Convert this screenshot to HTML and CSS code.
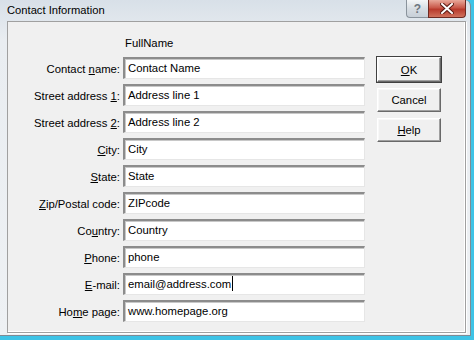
FILE: index.html
```html
<!DOCTYPE html>
<html>
<head>
<meta charset="utf-8">
<link rel="stylesheet" href="styles.css">
</head>
<body>
<div class="window">
  <div class="titlebar">
    <span class="title">Contact Information</span>
    <div class="caption-buttons">
      <div class="cap-help">?</div>
      <div class="cap-close">
        <svg width="14" height="11" viewBox="0 0 14 11"><path d="M2 1 L12 10 M12 1 L2 10" stroke="#5a1a12" stroke-width="4" stroke-linecap="square"/><path d="M2 1 L12 10 M12 1 L2 10" stroke="#fff" stroke-width="2" stroke-linecap="square"/></svg>
      </div>
    </div>
  </div>
  <div class="panel">
    <div class="form">
      <div class="heading">FullName</div>
      <label class="lbl">Contact <u>n</u>ame:</label><div class="box">Contact Name</div>
      <label class="lbl">Street address <u>1</u>:</label><div class="box">Address line 1</div>
      <label class="lbl">Street address <u>2</u>:</label><div class="box">Address line 2</div>
      <label class="lbl"><u>C</u>ity:</label><div class="box">City</div>
      <label class="lbl"><u>S</u>tate:</label><div class="box">State</div>
      <label class="lbl"><u>Z</u>ip/Postal code:</label><div class="box">ZIPcode</div>
      <label class="lbl">Co<u>u</u>ntry:</label><div class="box">Country</div>
      <label class="lbl"><u>P</u>hone:</label><div class="box">phone</div>
      <label class="lbl"><u>E</u>-mail:</label><div class="box">email@address.com<span class="caret"></span></div>
      <label class="lbl">Ho<u>m</u>e page:</label><div class="box">www.homepage.org</div>
    </div>
    <div class="buttons">
      <div class="btn default"><span><u>O</u>K</span></div>
      <div class="btn"><span>Cancel</span></div>
      <div class="btn"><span><u>H</u>elp</span></div>
    </div>
  </div>
</div>
</body>
</html>
```
FILE: styles.css
```css
html, body {
  margin: 0;
  padding: 0;
}
body {
  width: 474px;
  height: 340px;
  background: #3ec3e6;
  font-family: "Liberation Sans", Arial, sans-serif;
  font-size: 11.3px;
  color: #000;
  overflow: hidden;
}
.window {
  width: 471px;
  height: 336px;
  box-sizing: border-box;
  background: linear-gradient(to bottom, #d8e0e8 0px, #e9edf1 40px, #eef1f4 100%);
  border-right: 1px solid #7f8a94;
  border-bottom: 1px solid #7f8a94;
  border-top-right-radius: 6px;
  padding: 0 4px 2px 7px;
  display: flex;
  flex-direction: column;
}
.titlebar {
  height: 21px;
  display: flex;
  align-items: flex-start;
  justify-content: space-between;
  flex-shrink: 0;
}
.title {
  margin-top: 4px;
  font-size: 11.2px;
  color: #000;
}
.caption-buttons {
  display: flex;
}
.cap-help {
  width: 22px;
  height: 18px;
  box-sizing: border-box;
  border: 1px solid #8a939c;
  border-top: none;
  border-right: none;
  border-bottom-left-radius: 4px;
  background: linear-gradient(to bottom, #f4f6f8, #d7dde3 50%, #c8d0d8);
  color: #6c7680;
  font-weight: bold;
  font-size: 12px;
  text-align: center;
  line-height: 18px;
}
.cap-close {
  width: 38px;
  height: 18px;
  box-sizing: border-box;
  border: 1px solid #6e2a22;
  border-top: none;
  border-bottom-right-radius: 4px;
  background: linear-gradient(to bottom, #e8a89a, #c9594a 45%, #b83a2c 55%, #d0715c);
  display: flex;
  align-items: center;
  justify-content: center;
}
.panel {
  flex: 1;
  background: #f0f0f0;
  border: 1px solid #a0a0a0;
  box-shadow: inset -1px -1px 0 #fff, 1px 1px 0 #fff;
  display: flex;
  align-items: flex-start;
}
.form {
  display: grid;
  grid-template-columns: 112px 242px;
  column-gap: 3px;
  row-gap: 5px;
  align-items: center;
  padding-top: 13px;
}
.heading {
  grid-column: 2;
  padding-left: 2px;
  height: 16px;
  margin-bottom: 1px;
  line-height: 16px;
}
.lbl {
  grid-column: 1;
  text-align: right;
  white-space: nowrap;
  padding-top: 1px;
}
.box {
  grid-column: 2;
  height: 22px;
  box-sizing: border-box;
  background: #fff;
  border-top: 2px solid #8c8c8c;
  border-left: 2px solid #8c8c8c;
  border-right: 1px solid #e6e6e6;
  border-bottom: 1px solid #e6e6e6;
  box-shadow: inset 1px 1px 0 #c8c8c8;
  padding-left: 3px;
  line-height: 18px;
  white-space: nowrap;
}
.caret {
  display: inline-block;
  width: 1px;
  height: 15px;
  background: #000;
  vertical-align: -3px;
  margin-left: 1px;
}
.buttons {
  display: flex;
  flex-direction: column;
  gap: 6px;
  margin-left: 12px;
  margin-top: 35px;
}
.btn {
  width: 64px;
  height: 24px;
  box-sizing: border-box;
  background: #f0f0f0;
  border-top: 1px solid #fff;
  border-left: 1px solid #fff;
  border-right: 1px solid #696969;
  border-bottom: 1px solid #696969;
  box-shadow: inset -1px -1px 0 #a0a0a0, inset 1px 1px 0 #f8f8f8;
  display: flex;
  align-items: center;
  justify-content: center;
}
.btn.default {
  outline: 1px solid #404040;
  outline-offset: 0;
  height: 25px;
}
```
